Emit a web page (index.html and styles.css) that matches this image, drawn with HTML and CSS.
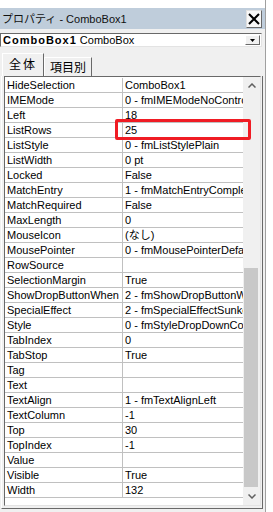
FILE: index.html
```html
<!DOCTYPE html>
<html lang="ja">
<head>
<meta charset="utf-8">
<title>プロパティ - ComboBox1</title>
<link rel="stylesheet" href="styles.css">
</head>
<body>
<div class="pane">
  <div class="topgap"></div>
  <div class="window">
    <div class="titlebar">
      <span class="title">プロパティ - ComboBox1</span>
      <span class="close"><svg width="12" height="12" viewBox="0 0 12 12"><path d="M1 1 L11 11 M11 1 L1 11" stroke="#000" stroke-width="2" fill="none"/></svg></span>
    </div>
    <div class="combo">
      <span class="combo-text"><b>ComboBox1</b> ComboBox</span>
      <span class="combo-btn"><svg width="5" height="3" viewBox="0 0 5 3"><path d="M0 0 H5 L2.5 3 Z" fill="#000"/></svg></span>
    </div>
    <div class="tabs">
      <div class="tab active">全体</div>
      <div class="tab">項目別</div>
    </div>
    <div class="tabpage">
      <div class="grid">
        <div class="rows">
          <div class="row"><div class="name">HideSelection</div><div class="val">ComboBox1</div></div>
          <div class="row"><div class="name">IMEMode</div><div class="val">0 - fmIMEModeNoControl</div></div>
          <div class="row"><div class="name">Left</div><div class="val">18</div></div>
          <div class="row"><div class="name">ListRows</div><div class="val">25</div><div class="highlight"></div></div>
          <div class="row"><div class="name">ListStyle</div><div class="val">0 - fmListStylePlain</div></div>
          <div class="row"><div class="name">ListWidth</div><div class="val">0 pt</div></div>
          <div class="row"><div class="name">Locked</div><div class="val">False</div></div>
          <div class="row"><div class="name">MatchEntry</div><div class="val">1 - fmMatchEntryComplete</div></div>
          <div class="row"><div class="name">MatchRequired</div><div class="val">False</div></div>
          <div class="row"><div class="name">MaxLength</div><div class="val">0</div></div>
          <div class="row"><div class="name">MouseIcon</div><div class="val">(なし)</div></div>
          <div class="row"><div class="name">MousePointer</div><div class="val">0 - fmMousePointerDefault</div></div>
          <div class="row"><div class="name">RowSource</div><div class="val"></div></div>
          <div class="row"><div class="name">SelectionMargin</div><div class="val">True</div></div>
          <div class="row"><div class="name">ShowDropButtonWhen</div><div class="val">2 - fmShowDropButtonWhenAlways</div></div>
          <div class="row"><div class="name">SpecialEffect</div><div class="val">2 - fmSpecialEffectSunken</div></div>
          <div class="row"><div class="name">Style</div><div class="val">0 - fmStyleDropDownCombo</div></div>
          <div class="row"><div class="name">TabIndex</div><div class="val">0</div></div>
          <div class="row"><div class="name">TabStop</div><div class="val">True</div></div>
          <div class="row"><div class="name">Tag</div><div class="val"></div></div>
          <div class="row"><div class="name">Text</div><div class="val"></div></div>
          <div class="row"><div class="name">TextAlign</div><div class="val">1 - fmTextAlignLeft</div></div>
          <div class="row"><div class="name">TextColumn</div><div class="val">-1</div></div>
          <div class="row"><div class="name">Top</div><div class="val">30</div></div>
          <div class="row"><div class="name">TopIndex</div><div class="val">-1</div></div>
          <div class="row"><div class="name">Value</div><div class="val"></div></div>
          <div class="row"><div class="name">Visible</div><div class="val">True</div></div>
          <div class="row"><div class="name">Width</div><div class="val">132</div></div>
        </div>
        <div class="scrollbar">
          <div class="sb-btn"><svg width="8" height="5" viewBox="0 0 8 5"><path d="M0.5 4.5 L4 1 L7.5 4.5" stroke="#606060" stroke-width="1.5" fill="none"/></svg></div>
          <div class="sb-track"><div class="sb-thumb"></div></div>
          <div class="sb-btn"><svg width="8" height="5" viewBox="0 0 8 5"><path d="M0.5 0.5 L4 4 L7.5 0.5" stroke="#606060" stroke-width="1.5" fill="none"/></svg></div>
        </div>
      </div>
    </div>
  </div>
</div>
</body>
</html>
```

FILE: styles.css
```css
* { box-sizing: border-box; }
html, body { margin: 0; padding: 0; background: #fff; }
body {
  width: 273px;
  height: 512px;
  overflow: hidden;
  font-family: "Liberation Sans", "Noto Sans CJK JP", sans-serif;
  font-size: 11px;
  color: #000;
}
.pane {
  width: 266px;
  height: 512px;
  border-right: 1px solid #a0a0a0;
  display: flex;
  flex-direction: column;
}
.topgap { height: 8px; flex: 0 0 8px; background: #fff; }
.window {
  flex: 1;
  min-height: 0;
  background: #f0f0f0;
  display: flex;
  flex-direction: column;
}
.titlebar {
  flex: 0 0 21px;
  height: 21px;
  background: #bfcddb;
  display: flex;
  align-items: center;
  justify-content: space-between;
  padding: 0 3px 0 2px;
}
.title { font-size: 11px; line-height: 14px; color: #111; white-space: nowrap; }
.close {
  width: 16px;
  height: 18px;
  margin-top: 1px;
  background: #f8f8f8;
  border: 1px solid;
  border-color: #e0e0e0 #696969 #696969 #e0e0e0;
  display: flex;
  align-items: center;
  justify-content: center;
}
.combo {
  margin: 4px 3px 0 0;
  flex: 0 0 14px;
  height: 14px;
  background: #fff;
  border: 1px solid;
  border-color: #696969 #e3e3e3 #e3e3e3 #696969;
  display: flex;
  align-items: center;
  justify-content: space-between;
  padding: 0 1px 0 2px;
}
.combo-text { line-height: 12px; white-space: nowrap; }
.combo-text b { letter-spacing: 1px; }
.combo-btn {
  width: 15px;
  height: 10px;
  background: #f0f0f0;
  border: 1px solid;
  border-color: #fff #696969 #696969 #fff;
  display: flex;
  align-items: flex-end;
  justify-content: center;
  padding-bottom: 2px;
}
.tabs {
  margin-top: 6px;
  flex: 0 0 23px;
  height: 23px;
  display: flex;
  align-items: flex-end;
  padding-left: 2px;
}
.tab {
  font-size: 12px;
  line-height: 14px;
  background: #f0f0f0;
  border: 1px solid;
  border-bottom: none;
  border-color: #fff #696969 #696969 #fff;
  display: flex;
  justify-content: center;
}
.tab.active { width: 42px; height: 23px; padding-top: 4px; letter-spacing: 2px; }
.tab:not(.active) { width: 48px; height: 19px; padding-top: 3px; }
.tabpage {
  margin-left: 1px;
  width: 262px;
  border-left: 1px solid #fff;
  border-right: 1px solid #696969;
  border-bottom: 1px solid #696969;
  padding: 0 1px 2px 2px;
}
.grid {
  width: 100%;
  height: 430px;
  border: 1px solid;
  border-color: #696969 #e3e3e3 #e3e3e3 #696969;
  background: #fff;
  display: flex;
}
.rows { flex: 1 1 0; min-width: 0; padding-top: 1px; }
.row {
  position: relative;
  height: 15px;
  display: flex;
  border-bottom: 1px solid #c0c0c0;
  line-height: 14px;
}
.name {
  width: 118px;
  flex: 0 0 118px;
  padding-left: 2px;
  border-right: 1px solid #c0c0c0;
  white-space: nowrap;
  overflow: hidden;
}
.val {
  flex: 1 1 0;
  min-width: 0;
  padding-left: 2px;
  white-space: nowrap;
  overflow: hidden;
}
.highlight {
  position: absolute;
  left: 110px;
  right: -8px;
  top: -4px;
  bottom: -3px;
  border: 3px solid #f01c24;
  border-radius: 2px;
  z-index: 2;
}
.scrollbar {
  flex: 0 0 17px;
  background: #f0f0f0;
  display: flex;
  flex-direction: column;
}
.sb-btn {
  flex: 0 0 17px;
  display: flex;
  align-items: center;
  justify-content: center;
}
.sb-track { flex: 1; }
.sb-thumb {
  margin: 174px 2px 0 1px;
  height: 219px;
  background: #c8c8c8;
}
```
